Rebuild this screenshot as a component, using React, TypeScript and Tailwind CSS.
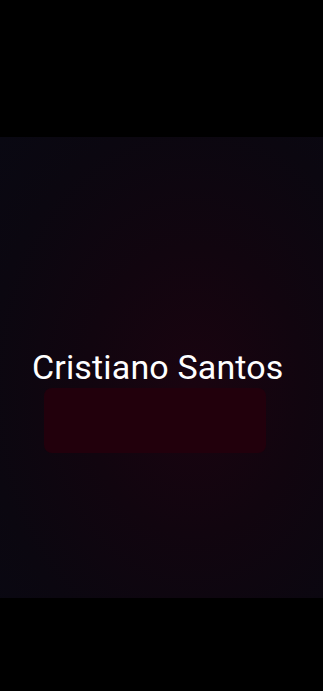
import React from "react";

export default function App() {
  return (
    <div className="w-[323px] h-[691px] bg-black flex flex-col" style={{ fontFamily: "Roboto, 'Noto Sans', sans-serif" }}>
      <div className="h-[137px] shrink-0 bg-black" />
      <div className="h-[461px] shrink-0 bg-[#0b0710] bg-[radial-gradient(ellipse_at_60%_55%,#1a0410_0%,#11050f_40%,#0b0710_75%,#090812_100%)] flex flex-col items-start">
        <div className="mt-[210px] pl-[32px] text-white text-[34px] leading-[40px] tracking-[0.15px] whitespace-nowrap">Cristiano Santos</div>
        <div className="mt-[1px] ml-[44px] w-[222px] h-[65px] rounded-[8px] bg-[#22000c] blur-[0.5px]" />
      </div>
      <div className="flex-1 bg-black" />
    </div>
  );
}
